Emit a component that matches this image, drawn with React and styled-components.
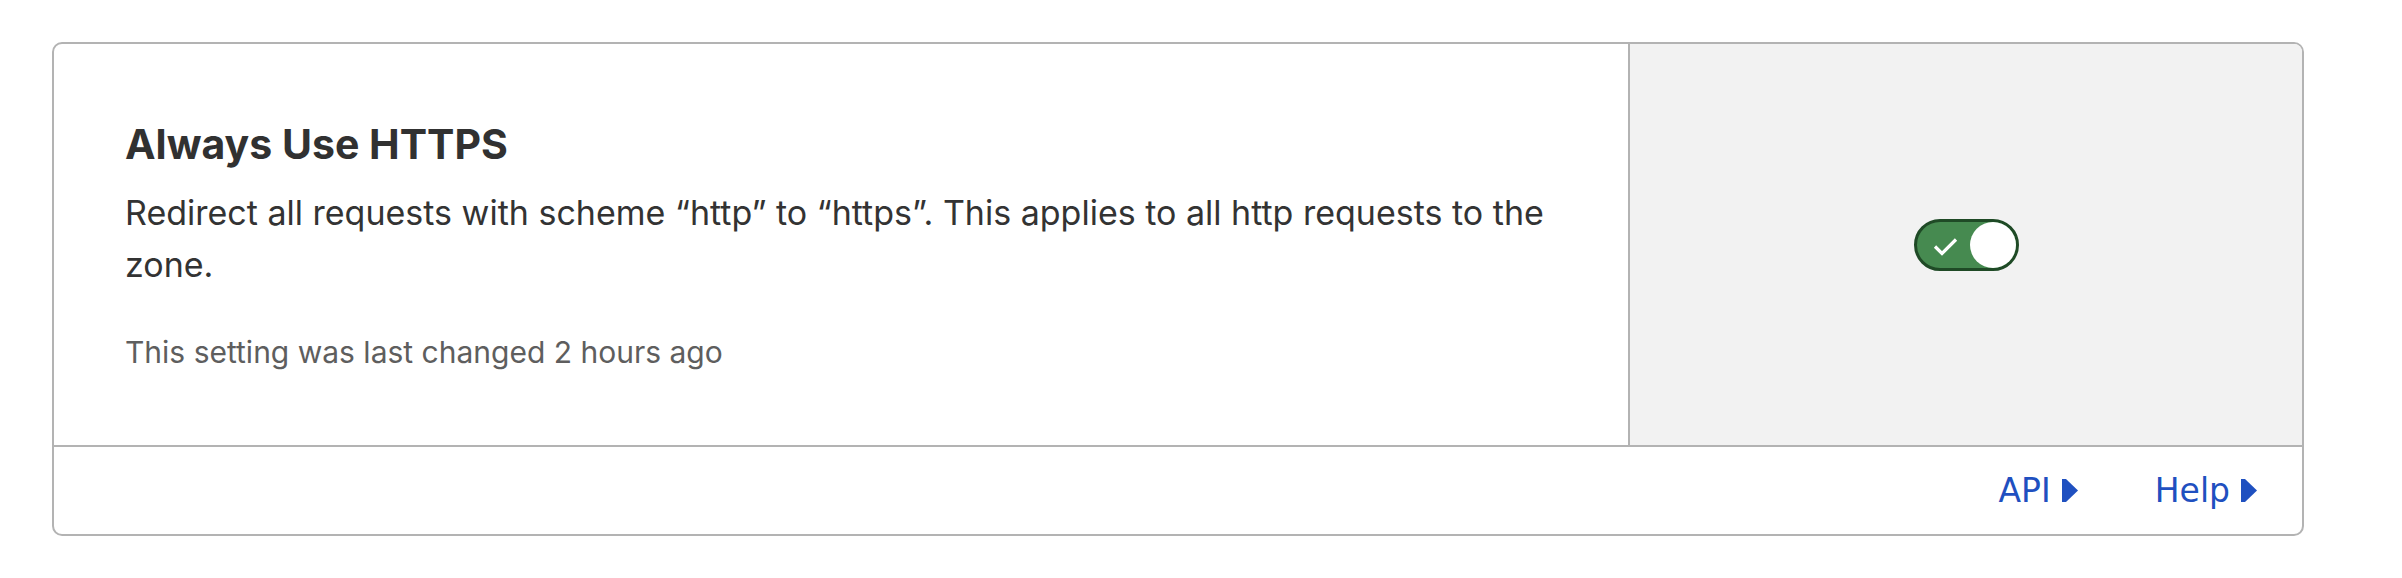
import React from "react";
import styled, { createGlobalStyle } from "styled-components";

const GlobalStyle = createGlobalStyle`
  html, body {
    margin: 0;
    padding: 0;
    background: #ffffff;
  }
  body {
    font-family: Inter, "Noto Sans", "Liberation Sans", sans-serif;
    color: #333333;
  }
`;

const Page = styled.div`
  padding: 42px 0 0 52px;
`;

const Card = styled.section`
  width: 2252px;
  box-sizing: border-box;
  border: 2px solid #b3b3b3;
  border-radius: 10px;
  overflow: hidden;
  background: #ffffff;
`;

const Body = styled.div`
  display: grid;
  grid-template-columns: 1574px 1fr;
  height: 401px;
  border-bottom: 2px solid #b3b3b3;
`;

const Content = styled.div`
  padding: 76px 40px 0 71px;
`;

const Title = styled.h3`
  margin: 0;
  font-size: 41px;
  line-height: 48px;
  font-weight: 700;
  color: #313131;
`;

const Description = styled.p`
  margin: 19px 0 0;
  font-size: 34px;
  line-height: 52px;
  color: #333333;
`;

const Meta = styled.p`
  margin: 43px 0 0;
  font-size: 30px;
  line-height: 36px;
  color: #5e5e5e;
`;

const ControlPane = styled.div`
  display: flex;
  align-items: center;
  justify-content: center;
  background: #f2f2f2;
  border-left: 2px solid #b3b3b3;
`;

const Switch = styled.button`
  position: relative;
  display: flex;
  align-items: center;
  justify-content: ${({ $on }) => ($on ? "flex-end" : "flex-start")};
  width: 105px;
  height: 52px;
  padding: 0;
  box-sizing: border-box;
  border: 3px solid ${({ $on }) => ($on ? "#1f4a26" : "#777777")};
  border-radius: 26px;
  background: ${({ $on }) => ($on ? "#468a50" : "#cccccc")};
  cursor: pointer;
`;

const Knob = styled.span`
  width: 46px;
  height: 46px;
  border-radius: 50%;
  background: #ffffff;
`;

const Check = styled.svg`
  position: absolute;
  left: 16px;
  top: 15px;
`;

const Footer = styled.footer`
  display: flex;
  justify-content: flex-end;
  align-items: center;
  gap: 77px;
  height: 87px;
  padding-right: 45px;
`;

const FooterLink = styled.a`
  display: flex;
  align-items: center;
  gap: 11px;
  font-family: "DejaVu Sans", "Liberation Sans", sans-serif;
  font-size: 33px;
  color: #1f50c0;
  text-decoration: none;
  cursor: pointer;
`;

const Caret = () => (
  <svg width="16" height="23" viewBox="0 0 16 23" aria-hidden="true">
    <polygon points="0,0 4,0 16,11.5 4,23 0,23" fill="#1f50c0" />
  </svg>
);

export default function App() {
  return (
    <>
      <GlobalStyle />
      <Page>
        <Card>
          <Body>
            <Content>
              <Title>Always Use HTTPS</Title>
              <Description>
                Redirect all requests with scheme “http” to “https”. This applies to all http
                requests to the zone.
              </Description>
              <Meta>This setting was last changed 2 hours ago</Meta>
            </Content>
            <ControlPane>
              <Switch $on aria-pressed="true" aria-label="Always Use HTTPS">
                <Check width="25" height="19" viewBox="0 0 25 19">
                  <polyline
                    points="2,9.5 9,16.5 23,2.5"
                    fill="none"
                    stroke="#ffffff"
                    strokeWidth="3.2"
                  />
                </Check>
                <Knob />
              </Switch>
            </ControlPane>
          </Body>
          <Footer>
            <FooterLink>
              API
              <Caret />
            </FooterLink>
            <FooterLink>
              Help
              <Caret />
            </FooterLink>
          </Footer>
        </Card>
      </Page>
    </>
  );
}
